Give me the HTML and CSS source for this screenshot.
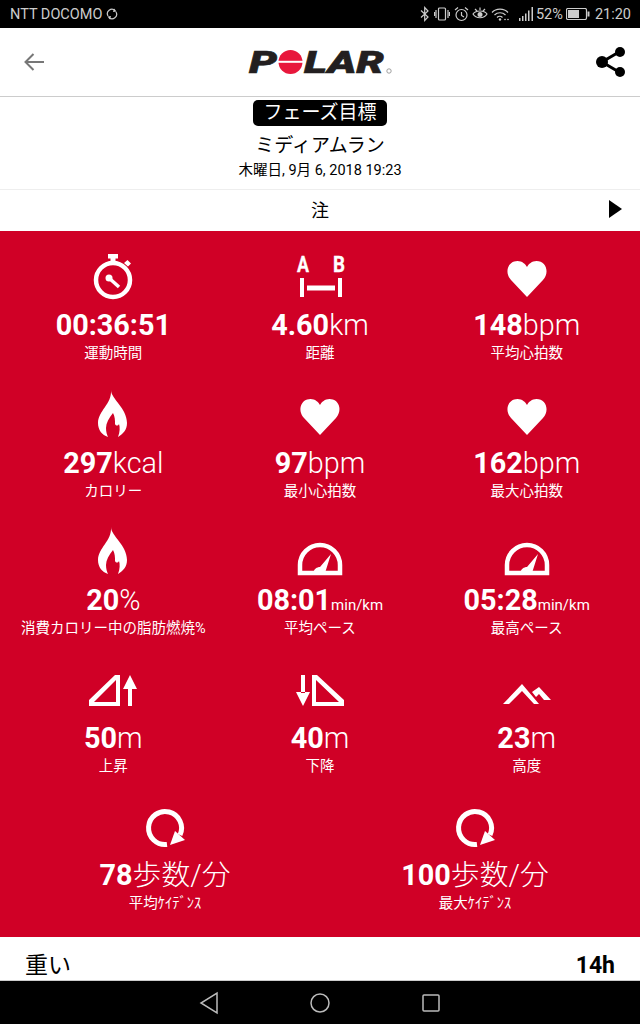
FILE: index.html
```html
<!doctype html>
<html lang="ja">
<head>
    <meta charset="utf-8">
    <meta name="viewport" content="width=device-width, initial-scale=1">
    <title>Polar</title>
    <link rel="stylesheet" href="styles.css">
</head>
<body>
<div class="screen">
    <div class="status-bar">
        <div class="carrier">
            <span>NTT DOCOMO</span>
            <svg width="12" height="12" viewBox="0 0 12 12"><path class="sb-line" d="M2 8A4.5 4.5 0 0 1 9 2.5M10 4A4.5 4.5 0 0 1 3 9.5"/><path class="sb-fill" d="M8 0.5L10.5 3.5L7 4ZM4 11.5L1.5 8.5L5 8Z"/></svg>
        </div>
        <div class="status-right">
            <svg width="10" height="16" viewBox="0 0 10 16"><path class="sb-line" d="M1 4.5L8 11L4.7 14.5V1.5L8 5L1 11.5"/></svg>
            <svg class="sb-vibrate" width="16" height="16" viewBox="0 0 16 16"><rect class="sb-line" x="4.5" y="2" width="7" height="12" rx="1"/><path class="sb-line" d="M2 4V12M14 4V12M0.5 6V10M15.5 6V10"/></svg>
            <svg class="sb-alarm" width="15" height="16" viewBox="0 0 15 16"><circle class="sb-line" cx="7.5" cy="9" r="5.5"/><path class="sb-line" d="M7.5 6V9.5L10 11M1 4L4 1.5M14 4L11 1.5"/></svg>
            <svg class="sb-eye" width="16" height="16" viewBox="0 0 16 16"><path class="sb-line" d="M1 8C4 4 12 4 15 8C12 13 4 13 1 8ZM3 3L5 5M13 3L11 5M8 1.5V4"/><circle class="sb-fill" cx="8" cy="8.5" r="2.5"/></svg>
            <svg class="sb-wifi" width="18" height="14" viewBox="0 0 18 14"><path class="sb-line" d="M1 5.5C5 1 13 1 17 5.5M3.5 8C6.5 5 11.5 5 14.5 8M6 10.5C7.5 9 10 9 11.5 10.5"/><circle class="sb-fill" cx="9" cy="12.5" r="1.2"/><circle class="sb-fill" cx="14" cy="12.5" r="0.8"/><circle class="sb-fill" cx="17" cy="12.5" r="0.8"/></svg>
            <svg class="sb-signal" width="15" height="14" viewBox="0 0 15 14"><path class="sb-fill" d="M0 11H1.5V14H0ZM3 9H4.5V14H3ZM6 6.5H7.5V14H6ZM9 3.5H10.5V14H9ZM12.5 0H14V14H12.5Z"/></svg>
            <span class="sb-percent">52%</span>
            <svg class="sb-battery" width="24" height="12" viewBox="0 0 24 12"><rect x="0.5" y="0.5" width="20" height="11" rx="1.5" class="sb-line"/><rect x="2" y="2" width="11" height="8" class="sb-fill"/><rect x="21.5" y="3.5" width="2" height="5" class="sb-fill"/></svg>
            <span class="sb-time">21:20</span>
        </div>
    </div>

    <header class="app-bar">
        <svg class="back" width="22" height="20" viewBox="0 0 22 20"><path d="M21 10H3M10.500 2L2.500 10L10.500 18"/></svg>
        <svg class="logo" width="146" height="26" viewBox="0 0 146 26">
            <text x="1" y="24" textLength="28" lengthAdjust="spacingAndGlyphs">P</text>
            <circle cx="42.500" cy="13" r="12" fill="#e8173c"/>
            <rect x="30" y="11.800" width="25" height="2" fill="#fff"/>
            <text x="56" y="24" textLength="80" lengthAdjust="spacingAndGlyphs">LAR</text>
            <circle cx="141" cy="22" r="2.200" fill="none" stroke="#888" stroke-width="0.800"/>
        </svg>
        <svg class="share" width="30" height="30" viewBox="0 0 30 30">
            <path d="M23 5L6 15L23 25" fill="none" stroke="#000" stroke-width="3"/>
            <circle cx="6" cy="15" r="6"/>
            <circle cx="24" cy="5" r="5"/>
            <circle cx="24" cy="25" r="5"/>
        </svg>
    </header>

    <section class="session">
        <div class="badge">フェーズ目標</div>
        <div class="session-title">ミディアムラン</div>
        <div class="session-date">木曜日, 9月 6, 2018 19:23</div>
    </section>

    <div class="note-row">
        <span class="note-text">注</span>
        <span class="note-arrow"></span>
    </div>

    <section class="stats">
        <div class="stat third">
            <svg class="stat-icon" viewBox="0 0 52 52">
                <circle cx="26" cy="29" r="17" fill="none" stroke="#fff" stroke-width="4.500"/>
                <path d="M21 3H31V7.500H28.500V11H23.500V7.500H21Z M37 12L40.500 9L44 12.500L41 15.500Z"/>
                <circle cx="22" cy="27" r="3.500"/>
                <path d="M22 27L32 36" stroke="#fff" stroke-width="3.500"/>
            </svg>
            <div class="stat-value"><b>00:36:51</b></div>
            <div class="stat-label">運動時間</div>
        </div>
        <div class="stat third">
            <svg class="stat-icon" viewBox="0 0 52 52">
                <text class="ab" x="3" y="21" textLength="12" lengthAdjust="spacingAndGlyphs">A</text>
                <text class="ab" x="39" y="21" textLength="12" lengthAdjust="spacingAndGlyphs">B</text>
                <path d="M6 27H10V46H6ZM44 27H48V46H44ZM13 34.500H41V39.500H13Z"/>
            </svg>
            <div class="stat-value"><b>4.60</b>km</div>
            <div class="stat-label">距離</div>
        </div>
        <div class="stat third">
            <svg class="stat-icon" viewBox="0 0 52 52"><use href="#heart"/></svg>
            <div class="stat-value"><b>148</b>bpm</div>
            <div class="stat-label">平均心拍数</div>
        </div>

        <div class="stat third">
            <svg class="stat-icon" viewBox="0 0 52 52"><use href="#flame"/></svg>
            <div class="stat-value"><b>297</b>kcal</div>
            <div class="stat-label">カロリー</div>
        </div>
        <div class="stat third">
            <svg class="stat-icon" viewBox="0 0 52 52"><use href="#heart"/></svg>
            <div class="stat-value"><b>97</b>bpm</div>
            <div class="stat-label">最小心拍数</div>
        </div>
        <div class="stat third">
            <svg class="stat-icon" viewBox="0 0 52 52"><use href="#heart"/></svg>
            <div class="stat-value"><b>162</b>bpm</div>
            <div class="stat-label">最大心拍数</div>
        </div>

        <div class="stat third">
            <svg class="stat-icon" viewBox="0 0 52 52"><use href="#flame"/></svg>
            <div class="stat-value"><b>20</b>%</div>
            <div class="stat-label">消費カロリー中の脂肪燃焼%</div>
        </div>
        <div class="stat third">
            <svg class="stat-icon" viewBox="0 0 52 52"><use href="#gauge"/></svg>
            <div class="stat-value"><b>08:01</b><small>min/km</small></div>
            <div class="stat-label">平均ペース</div>
        </div>
        <div class="stat third">
            <svg class="stat-icon" viewBox="0 0 52 52"><use href="#gauge"/></svg>
            <div class="stat-value"><b>05:28</b><small>min/km</small></div>
            <div class="stat-label">最高ペース</div>
        </div>

        <div class="stat third">
            <svg class="stat-icon" viewBox="0 0 52 52">
                <path fill-rule="evenodd" d="M28 11H33V42H2V36ZM29 16L7 38H29Z"/>
                <path d="M41 24H45V42H41ZM36 25L43 11L50 25Z"/>
            </svg>
            <div class="stat-value"><b>50</b>m</div>
            <div class="stat-label">上昇</div>
        </div>
        <div class="stat third">
            <svg class="stat-icon" viewBox="0 0 52 52">
                <path fill-rule="evenodd" d="M18 11H23L50 36V42H18ZM22 16V38H45Z"/>
                <path d="M7 11H11V29H7ZM2 28L9 42L16 28Z"/>
            </svg>
            <div class="stat-value"><b>40</b>m</div>
            <div class="stat-label">下降</div>
        </div>
        <div class="stat third">
            <svg class="stat-icon" viewBox="0 0 52 52">
                <path d="M2 40L21 20L38 40H33L21 27L8 40Z"/>
                <path d="M31 28L38 23L50 36H43L38 30L35 33Z"/>
            </svg>
            <div class="stat-value"><b>23</b>m</div>
            <div class="stat-label">高度</div>
        </div>

        <div class="stat half">
            <svg class="stat-icon" viewBox="0 0 52 52"><use href="#cadence"/></svg>
            <div class="stat-value"><b>78</b>歩数/分</div>
            <div class="stat-label">平均ｹｲﾃﾞﾝｽ</div>
        </div>
        <div class="stat half">
            <svg class="stat-icon" viewBox="0 0 52 52"><use href="#cadence"/></svg>
            <div class="stat-value"><b>100</b>歩数/分</div>
            <div class="stat-label">最大ｹｲﾃﾞﾝｽ</div>
        </div>
    </section>

    <div class="zone-row">
        <span>重い</span>
        <b>14h</b>
    </div>

    <nav class="nav-bar">
        <svg width="20" height="24" viewBox="0 0 20 24"><path d="M18 2V22L2 12Z"/></svg>
        <svg width="22" height="22" viewBox="0 0 22 22"><circle cx="11" cy="11" r="9"/></svg>
        <svg width="20" height="20" viewBox="0 0 20 20"><rect x="2" y="2" width="16" height="16" rx="1"/></svg>
    </nav>
</div>

<svg class="defs" width="0" height="0">
    <defs>
        <path id="heart" d="M26 46L10 29C3 21 7 10 16.500 10C21 10 24.500 13 26 16C27.500 13 31 10 35.500 10C45 10 49 21 42 29Z"/>
        <path id="flame" d="M24 1C24 10 40 19 40 34C40 41 36 45 31 48C33 43 33 38 32 35C31 37 29 37 28 35C28 31 28 28 26 24C22 29 19 34 19 39C19 43 20 46 21 48C15 46 11 41 11 34C11 22 25 15 24 1Z"/>
        <g id="gauge">
            <path d="M6 47V39A20 20 0 0 1 46 39V47Z" fill="none" stroke="#fff" stroke-width="4.500"/>
            <path d="M19 47C20 43 23 41 26 41L37 28L31 47Z"/>
        </g>
        <g id="cadence">
            <path d="M41 34A16.500 16.500 0 1 0 28 43.400" fill="none" stroke="#fff" stroke-width="5"/>
            <path d="M31 44L46 39L36 30Z"/>
        </g>
    </defs>
</svg>
</body>
</html>
```

FILE: styles.css
```css
body {
    margin: 0;
    background: #000;
    font-family: Roboto, "Noto Sans CJK JP", sans-serif;
    color: #000;
}

.screen {
    width: 640px;
    height: 1024px;
    display: flex;
    flex-direction: column;
    overflow: hidden;
    background: #fff;
}

.defs {
    position: absolute;
}

/* status bar */
.status-bar {
    height: 28px;
    flex: none;
    padding: 0 9px 0 10px;
    display: flex;
    align-items: center;
    justify-content: space-between;
    background: #000;
    color: #ccc;
    font-size: 14.500px;
}

.carrier,
.status-right {
    display: flex;
    align-items: center;
}

.carrier {
    gap: 4px;
}

.sb-line {
    fill: none;
    stroke: #ccc;
    stroke-width: 1.2;
}

.sb-fill {
    fill: #ccc;
}

.sb-vibrate { margin-left: 4px; }
.sb-alarm { margin-left: 4px; }
.sb-eye { margin-left: 3px; }
.sb-wifi { margin-left: 3px; }
.sb-signal { margin-left: 10px; }
.sb-percent { margin-left: 2px; }
.sb-battery { margin-left: 3px; }
.sb-time { margin-left: 5px; }

/* app bar */
.app-bar {
    height: 68px;
    flex: none;
    padding: 0 14px 0 23px;
    display: flex;
    align-items: center;
    justify-content: space-between;
    border-bottom: 1px solid #ccc;
}

.back path {
    fill: none;
    stroke: #777;
    stroke-width: 2;
}

.logo {
    overflow: visible;
    font-family: Roboto, sans-serif;
    font-size: 32px;
    font-weight: 900;
    font-style: italic;
    fill: #231f20;
    stroke: #231f20;
    stroke-width: 0.600;
}

.logo circle,
.logo rect {
    stroke-width: 0;
}

.logo circle:last-child {
    stroke-width: 0.800;
}

/* session header */
.session {
    height: 93px;
    flex: none;
    padding-top: 3px;
    box-sizing: border-box;
    display: flex;
    flex-direction: column;
    align-items: center;
    border-bottom: 1px solid #eee;
}

.badge {
    height: 26px;
    padding: 0 10px;
    border-radius: 5px;
    background: #000;
    color: #fff;
    font-size: 19px;
    line-height: 26px;
}

.session-title {
    margin-top: 7px;
    font-size: 19px;
    line-height: 26px;
}

.session-date {
    margin-top: -1px;
    font-size: 14.500px;
    line-height: 26px;
}

.note-row {
    height: 41px;
    flex: none;
    display: flex;
    align-items: center;
    justify-content: center;
    position: relative;
    font-size: 18px;
}

.note-text {
    margin-bottom: 3px;
}

.note-arrow {
    position: absolute;
    right: 18px;
    top: 10px;
    border-left: 13px solid #000;
    border-top: 9.500px solid transparent;
    border-bottom: 9.500px solid transparent;
}

/* red stat grid */
.stats {
    height: 706px;
    flex: none;
    box-sizing: border-box;
    padding: 20px 10px 0;
    display: grid;
    grid-template-columns: repeat(6, 1fr);
    grid-auto-rows: 137.500px;
    background: #d00026;
    color: #fff;
}

.stat {
    display: flex;
    flex-direction: column;
    align-items: center;
}

.third {
    grid-column: span 2;
}

.half {
    grid-column: span 3;
}

.stat-icon {
    width: 52px;
    height: 52px;
    flex: none;
    fill: #fff;
}

.ab {
    font-family: Roboto, sans-serif;
    font-size: 22px;
    font-weight: 700;
    stroke: #fff;
    stroke-width: 0.300;
}

.stat-value {
    height: 34px;
    margin-top: 5px;
    font-size: 28.800px;
    font-weight: 300;
    line-height: 34px;
    white-space: nowrap;
}

.stat-value b {
    font-weight: 700;
}

.stat-value small {
    font-size: 15px;
    font-weight: 400;
}

.stat-label {
    margin-top: 2px;
    font-size: 14.500px;
    line-height: 20px;
    white-space: nowrap;
}

/* bottom */
.zone-row {
    flex: 1;
    min-height: 0;
    padding: 15px 25px 0;
    display: flex;
    justify-content: space-between;
    font-size: 23px;
    line-height: 28px;
}

.nav-bar {
    height: 43px;
    flex: none;
    border-top: 1px solid #ccc;
    display: flex;
    align-items: center;
    justify-content: center;
    gap: 90px;
    background: #000;
}

.nav-bar svg {
    fill: none;
    stroke: #bbb;
    stroke-width: 1.500;
}
```
